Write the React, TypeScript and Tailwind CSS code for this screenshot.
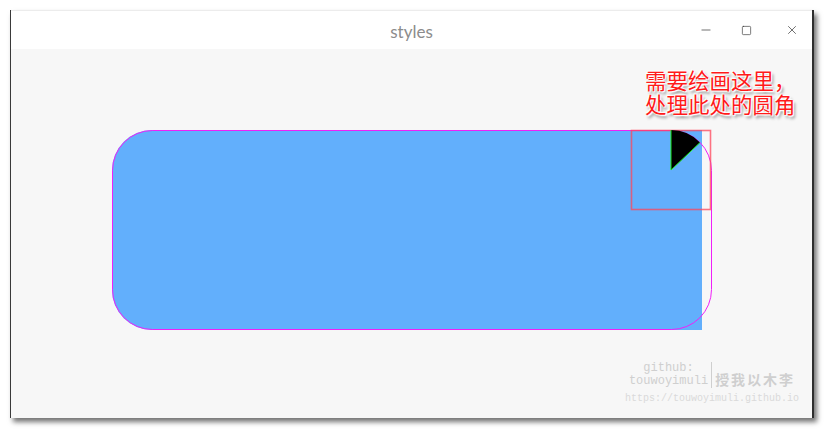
import { Minus, Square, X } from "lucide-react";

const Drawing = () => {
  // page coordinates: content area starts at (11, 49)
  return (
    <svg
      className="absolute inset-0"
      width={802}
      height={369}
      viewBox="11 49 802 369"
    >
      <path
        d="M152,130 H702 V330 H152 A40,40 0 0 1 112,290 V170 A40,40 0 0 1 152,130 Z"
        fill="#62affc"
      />
      <rect
        x={112.5}
        y={130.5}
        width={599}
        height={199}
        rx={40}
        fill="none"
        stroke="#f020f8"
        strokeWidth={1}
      />
      <rect
        x={631.5}
        y={130.5}
        width={79}
        height={79}
        fill="none"
        stroke="rgba(255,70,90,0.75)"
        strokeWidth={1.6}
      />
      <path d="M671,170 L671,130 A40,40 0 0 1 700,142.5 Z" fill="#000" />
      <path
        d="M671,130 L671,170 L700,142.5"
        fill="none"
        stroke="#19e619"
        strokeWidth={1}
      />
    </svg>
  );
};

const App = () => {
  return (
    <div className="w-[825px] h-[430px] bg-white pl-[10px] pt-[10px]">
      <div className="w-[804px] h-[408px] flex flex-col border-l border-l-[#3a3a3a] border-r-2 border-r-[#2e2e2e] shadow-[3px_4px_5px_rgba(0,0,0,0.55)]">
        <div className="h-[39px] bg-white relative flex items-center justify-center border-t border-t-[#ececec]">
          <span
            className="text-[17px] text-[#8c8c8c] pt-[3px]"
            style={{ fontFamily: "Lato, 'Open Sans', sans-serif" }}
          >
            styles
          </span>
          <div className="absolute right-[13px] top-[12px] flex items-center text-[#333]">
            <Minus size={14} strokeWidth={1.2} className="mr-[28px]" />
            <Square size={11} strokeWidth={1.4} className="mr-[33px]" />
            <X size={14} strokeWidth={1.2} />
          </div>
        </div>
        <div className="flex-1 bg-[#f7f7f7] relative overflow-hidden">
          <Drawing />
          <div
            className="absolute left-[634px] top-[19px] text-[#ff1a1a] text-[21.5px] leading-[24px] [text-shadow:0_0_2px_#fff,0_0_2px_#fff,1px_1px_1px_#fff,-1px_-1px_1px_#fff,2px_3px_3px_rgba(0,0,0,0.45)]"
            style={{ fontFamily: "'Noto Sans CJK SC', sans-serif" }}
          >
            <div>需要绘画这里，</div>
            <div>处理此处的圆角</div>
          </div>
          <div className="absolute left-[614px] top-[310px] flex flex-col items-center text-[#cfcfcf]">
            <div className="flex items-center">
              <div
                className="flex flex-col items-center text-[12px] leading-[13px]"
                style={{ fontFamily: "'Liberation Mono', monospace" }}
              >
                <span>github:</span>
                <span>touwoyimuli</span>
              </div>
              <div className="w-px h-[26px] bg-[#cfcfcf] mx-[3px]" />
              <span
                className="text-[14px] font-bold tracking-[2px] pt-[10px]"
                style={{ fontFamily: "'Noto Sans CJK SC', sans-serif" }}
              >
                授我以木李
              </span>
            </div>
            <span
              className="text-[10px] leading-[14px] mt-[2px] text-[#dadada]"
              style={{ fontFamily: "'Liberation Mono', monospace" }}
            >
              https://touwoyimuli.github.io
            </span>
          </div>
        </div>
      </div>
    </div>
  );
};

export default App;
